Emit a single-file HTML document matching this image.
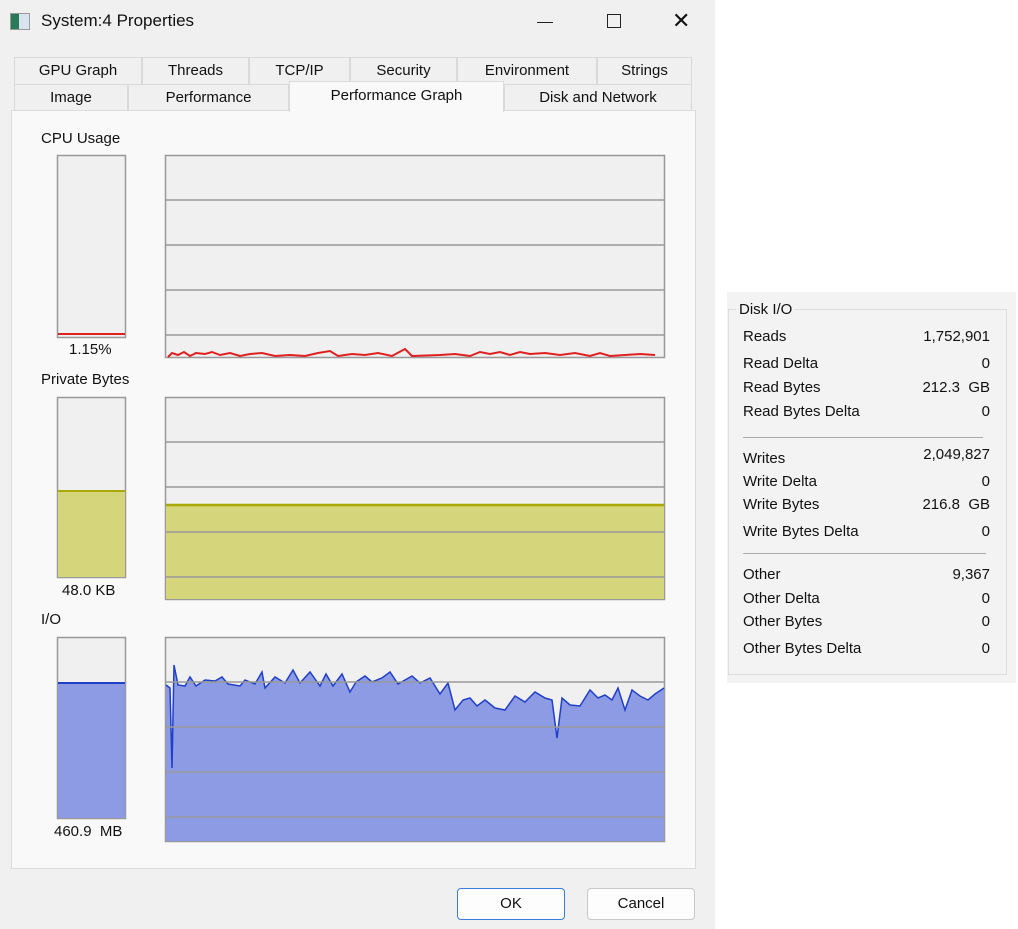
<!DOCTYPE html>
<html><head><meta charset="utf-8"><style>
*{margin:0;padding:0;box-sizing:border-box}
body{width:1018px;height:929px;background:#fff;position:relative;overflow:hidden;font-family:"Liberation Sans","DejaVu Sans",sans-serif;font-size:15px;color:#111}
.a{position:absolute;white-space:nowrap}
.win{position:absolute;left:0;top:0;width:715px;height:929px;background:#f0f0f0}
.tab{position:absolute;height:27px;background:#f0f0f0;border:1px solid #d9d9d9;border-bottom:none;text-align:center;line-height:26px;font-size:15px}
.btn{position:absolute;height:32px;background:#fdfdfd;border:1px solid #c8c8c8;border-radius:4px;text-align:center;line-height:30px}
.r{position:absolute;left:743px;width:247px;font-size:15px}
.r span{position:absolute;right:0}
</style></head><body>
<div class="win"></div>
<div class="a" style="left:10px;top:13px;width:20px;height:17px;border:1px solid #999;background:linear-gradient(90deg,#2a7a5a 0 45%,#d8e4ee 45%)"></div>
<div class="a" style="left:41px;top:11px;font-size:17px">System:4 Properties</div>
<div class="a" style="left:537px;top:22px;width:16px;height:1px;background:#222"></div>
<div class="a" style="left:607px;top:14px;width:14px;height:14px;border:1.3px solid #222"></div>
<div class="a" style="left:672px;top:8px;font-size:22px;font-weight:300">✕</div>

<div class="tab" style="left:14px;top:57px;width:128px">GPU Graph</div>
<div class="tab" style="left:142px;top:57px;width:107px">Threads</div>
<div class="tab" style="left:249px;top:57px;width:101px">TCP/IP</div>
<div class="tab" style="left:350px;top:57px;width:107px">Security</div>
<div class="tab" style="left:457px;top:57px;width:140px">Environment</div>
<div class="tab" style="left:597px;top:57px;width:95px">Strings</div>
<div class="tab" style="left:14px;top:84px;width:114px">Image</div>
<div class="tab" style="left:128px;top:84px;width:161px">Performance</div>
<div class="tab" style="left:504px;top:84px;width:188px">Disk and Network</div>
<div class="a" style="left:11px;top:110px;width:685px;height:759px;background:#f9f9f9;border:1px solid #dcdcdc"></div>
<div class="tab" style="left:289px;top:81px;width:215px;height:31px;background:#f9f9f9;border-color:#dcdcdc;line-height:28px">Performance Graph</div>

<div class="a" style="left:41px;top:130px">CPU Usage</div>
<div class="a" style="left:69px;top:341px">1.15%</div>
<div class="a" style="left:41px;top:371px">Private Bytes</div>
<div class="a" style="left:62px;top:582px">48.0 KB</div>
<div class="a" style="left:41px;top:611px">I/O</div>
<div class="a" style="left:54px;top:823px">460.9&nbsp; MB</div>

<svg class="a" style="left:0;top:0" width="715" height="929">
<g stroke="#999" stroke-width="1.5" fill="#f0f0f0">
<rect x="57.5" y="155.5" width="68" height="182"/>
<rect x="165.5" y="155.5" width="499" height="202"/>
<rect x="57.5" y="397.5" width="68" height="180"/>
<rect x="165.5" y="397.5" width="499" height="202"/>
<rect x="57.5" y="637.5" width="68" height="181"/>
<rect x="165.5" y="637.5" width="499" height="204"/>
</g>
<line x1="58" y1="334" x2="125" y2="334" stroke="#e02020" stroke-width="2"/>
<rect x="58" y="490" width="67" height="87" fill="#d5d57c"/>
<line x1="58" y1="491" x2="125" y2="491" stroke="#a8a800" stroke-width="2"/>
<rect x="58" y="683" width="67" height="135" fill="#8c9be3"/>
<line x1="58" y1="683" x2="125" y2="683" stroke="#2040c8" stroke-width="2"/>
<rect x="166" y="504" width="498" height="95" fill="#d5d57c"/>
<line x1="166" y1="505" x2="664" y2="505" stroke="#a8a800" stroke-width="2.5"/>
<path d="M166 685 L170 688 L172 768 L174 665 L178 685 L185 686 L190 677 L196 686 L205 680 L215 681 L222 677 L228 684 L240 686 L245 680 L255 684 L262 672 L265 688 L275 677 L285 683 L293 670 L300 683 L310 672 L320 686 L326 674 L333 686 L342 674 L350 692 L356 682 L365 676 L372 682 L382 678 L390 672 L398 684 L405 680 L412 676 L420 683 L430 678 L440 694 L448 683 L455 710 L463 700 L470 698 L477 706 L485 700 L495 708 L505 710 L515 696 L525 702 L535 692 L545 698 L552 700 L557 738 L562 698 L570 705 L580 706 L590 690 L598 698 L605 695 L612 700 L618 688 L625 710 L632 690 L640 696 L648 700 L655 694 L664 688 L664 841 L166 841 Z" fill="#8c9be3"/>
<path d="M166 685 L170 688 L172 768 L174 665 L178 685 L185 686 L190 677 L196 686 L205 680 L215 681 L222 677 L228 684 L240 686 L245 680 L255 684 L262 672 L265 688 L275 677 L285 683 L293 670 L300 683 L310 672 L320 686 L326 674 L333 686 L342 674 L350 692 L356 682 L365 676 L372 682 L382 678 L390 672 L398 684 L405 680 L412 676 L420 683 L430 678 L440 694 L448 683 L455 710 L463 700 L470 698 L477 706 L485 700 L495 708 L505 710 L515 696 L525 702 L535 692 L545 698 L552 700 L557 738 L562 698 L570 705 L580 706 L590 690 L598 698 L605 695 L612 700 L618 688 L625 710 L632 690 L640 696 L648 700 L655 694 L664 688" fill="none" stroke="#2040c8" stroke-width="1.5"/>
<g stroke="#999" stroke-width="1.5">
<line x1="166" y1="200" x2="664" y2="200"/><line x1="166" y1="245" x2="664" y2="245"/><line x1="166" y1="290" x2="664" y2="290"/><line x1="166" y1="335" x2="664" y2="335"/>
<line x1="166" y1="442" x2="664" y2="442"/><line x1="166" y1="487" x2="664" y2="487"/><line x1="166" y1="532" x2="664" y2="532"/><line x1="166" y1="577" x2="664" y2="577"/>
<line x1="166" y1="682" x2="664" y2="682"/><line x1="166" y1="727" x2="664" y2="727"/><line x1="166" y1="772" x2="664" y2="772"/><line x1="166" y1="817" x2="664" y2="817"/>
</g>
<path d="M168 357 L172 353 L178 355 L184 352 L190 356 L196 353 L205 354 L212 352 L220 355 L230 353 L240 356 L250 354 L262 353 L275 356 L290 355 L305 356 L318 353 L330 351 L338 356 L352 354 L365 355 L378 353 L392 356 L405 349 L412 356 L440 355 L455 354 L470 356 L480 352 L490 354 L500 352 L510 355 L520 352 L530 354 L545 353 L560 355 L575 353 L590 356 L600 353 L610 356 L640 354 L655 355" fill="none" stroke="#e02020" stroke-width="2"/>
</svg>

<div class="btn" style="left:457px;top:888px;width:108px;border:1.5px solid #3b7dd8">OK</div>
<div class="btn" style="left:587px;top:888px;width:108px">Cancel</div>

<div class="a" style="left:727px;top:292px;width:289px;height:391px;background:#f3f3f3"></div>
<div class="a" style="left:728px;top:309px;width:279px;height:366px;border:1px solid #dcdcdc"></div>
<div class="a" style="left:736px;top:301px;background:#f3f3f3;padding:0 3px">Disk I/O</div>
<div class="r" style="top:328px">Reads<span>1,752,901</span></div>
<div class="r" style="top:355px">Read Delta<span>0</span></div>
<div class="r" style="top:379px">Read Bytes<span>212.3&nbsp; GB</span></div>
<div class="r" style="top:403px">Read Bytes Delta<span>0</span></div>
<div class="a" style="left:743px;top:437px;width:240px;height:1px;background:#aaa"></div>
<div class="r" style="top:450px">Writes<span style="top:-4px">2,049,827</span></div>
<div class="r" style="top:473px">Write Delta<span>0</span></div>
<div class="r" style="top:496px">Write Bytes<span>216.8&nbsp; GB</span></div>
<div class="r" style="top:523px">Write Bytes Delta<span>0</span></div>
<div class="a" style="left:743px;top:553px;width:243px;height:1px;background:#aaa"></div>
<div class="r" style="top:566px">Other<span>9,367</span></div>
<div class="r" style="top:590px">Other Delta<span>0</span></div>
<div class="r" style="top:613px">Other Bytes<span>0</span></div>
<div class="r" style="top:640px">Other Bytes Delta<span>0</span></div>
</body></html>
